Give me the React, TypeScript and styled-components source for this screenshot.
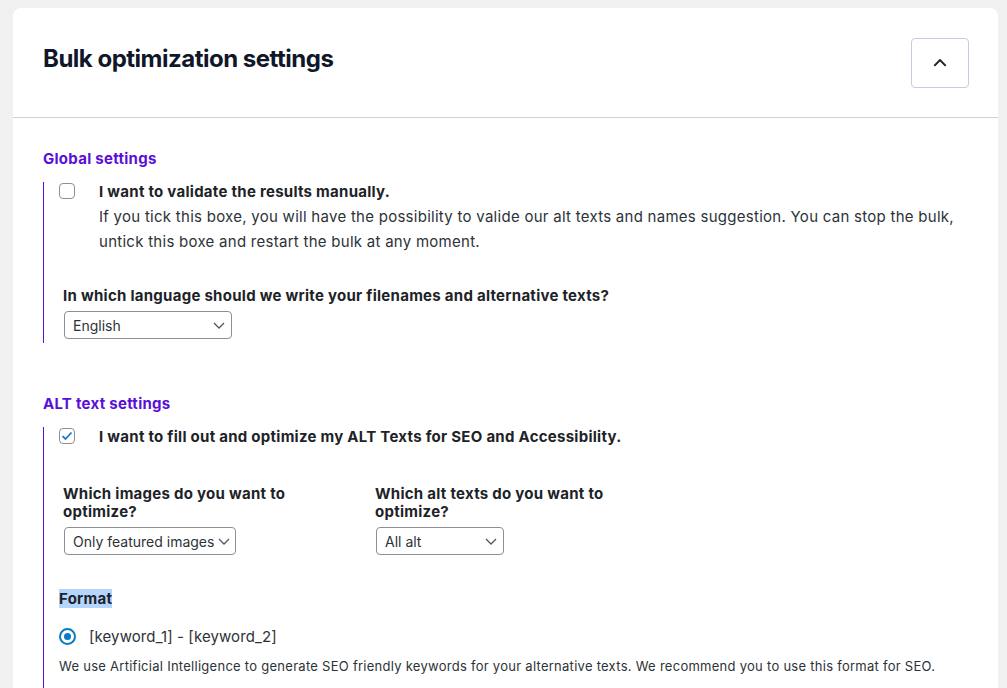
import React from "react";
import styled, { createGlobalStyle } from "styled-components";

const GlobalStyle = createGlobalStyle`
  html, body {
    margin: 0;
    padding: 0;
    background: #f0f0f1;
    font-family: Inter, "Liberation Sans", sans-serif;
    letter-spacing: 0.27px;
    color: #1d2327;
  }
`;

const Page = styled.div`
  padding: 8px 9px 0 13px;
  height: 680px;
  overflow: hidden;
`;

const Card = styled.div`
  background: #fff;
  border-radius: 8px 8px 0 0;
  min-height: 700px;
`;

const CardHeader = styled.div`
  height: 110px;
  display: flex;
  align-items: center;
  justify-content: space-between;
  padding: 0 29px 0 30px;
  border-bottom: 1px solid #c8d2df;
  box-sizing: border-box;
`;

const Title = styled.h2`
  margin: 0;
  margin-top: -8px;
  font-size: 24px;
  font-weight: 700;
  letter-spacing: -0.5px;
  color: #0f1729;
`;

const CollapseButton = styled.button`
  width: 58px;
  height: 50px;
  border: 1px solid #c3cfdf;
  border-radius: 4px;
  background: #fff;
  display: flex;
  align-items: center;
  justify-content: center;
  padding: 0;
`;

const Body = styled.div`
  padding: 31px 30px 0 30px;
`;

const SectionTitle = styled.h3`
  margin: 0 0 14px;
  font-size: 15px;
  font-weight: 700;
  color: #5a0fd9;
`;

const Section = styled.div<{ $gap: number }>`
  margin-bottom: ${(p) => p.$gap}px;
`;

const Rail = styled.div`
  border-left: 1px solid #5a0fd9;
  padding-left: 15px;
  padding-bottom: 4px;
`;

const CheckRow = styled.div`
  display: flex;
  align-items: flex-start;
  gap: 24px;
`;

const Box = styled.span`
  flex: none;
  width: 16px;
  height: 16px;
  margin-top: 1px;
  box-sizing: border-box;
  border: 1px solid #8c8f94;
  border-radius: 4px;
  display: flex;
  align-items: center;
  justify-content: center;
  background: #fff;
`;

const CheckText = styled.div`
  font-size: 15px;
  line-height: 25px;
  margin-top: -3px;
  color: #2c3338;
`;

const Strong = styled.div`
  font-weight: 700;
  color: #1d2327;
`;

const Field = styled.div`
  padding-left: 4px;
`;

const Label = styled.div`
  font-size: 15px;
  font-weight: 700;
  line-height: 18px;
  color: #1d2327;
  margin-bottom: 6px;
`;

const Select = styled.div<{ $w: number }>`
  width: ${(p) => p.$w}px;
  height: 28px;
  box-sizing: border-box;
  border: 1px solid #8c8f94;
  border-radius: 4px;
  display: flex;
  align-items: center;
  justify-content: space-between;
  gap: 4px;
  padding: 0 6px 0 8px;
  font-size: 14px;
  letter-spacing: 0;
  color: #2c3338;
  margin-left: 1px;
  white-space: nowrap;
  svg {
    flex: none;
  }
`;

const Columns = styled.div`
  display: grid;
  grid-template-columns: 256px 256px;
  column-gap: 56px;
  padding-left: 4px;
`;

const Format = styled.span`
  font-size: 15px;
  font-weight: 700;
  color: #1d2327;
  background: #b4d5fe;
`;

const RadioRow = styled.div`
  display: flex;
  align-items: center;
  gap: 13px;
  font-size: 15px;
  letter-spacing: 0.1px;
  color: #2c3338;
`;

const Radio = styled.span`
  flex: none;
  width: 17px;
  height: 17px;
  box-sizing: border-box;
  border-radius: 50%;
  border: 2px solid #0a7cc4;
  display: flex;
  align-items: center;
  justify-content: center;
  &::after {
    content: "";
    width: 7px;
    height: 7px;
    border-radius: 50%;
    background: #0a7cc4;
  }
`;

const Hint = styled.div`
  font-size: 13px;
  color: #2c3338;
  margin-top: 12px;
`;

const Chevron = ({ up }: { up?: boolean }) => (
  <svg width={up ? 14 : 12} height={up ? 8 : 7} viewBox="0 0 12 7" fill="none">
    <path
      d={up ? "M1 6L6 1L11 6" : "M1 1L6 6L11 1"}
      stroke={up ? "#1d2327" : "#50575e"}
      strokeWidth={up ? 1.8 : 1.3}
    />
  </svg>
);

const Check = () => (
  <svg width="12" height="10" viewBox="0 0 12 10" fill="none">
    <path d="M1.5 5.2L4.5 8L10.5 1.5" stroke="#1f78c1" strokeWidth="1.8" />
  </svg>
);

export default function App() {
  return (
    <>
      <GlobalStyle />
      <Page>
        <Card>
          <CardHeader>
            <Title>Bulk optimization settings</Title>
            <CollapseButton>
              <Chevron up />
            </CollapseButton>
          </CardHeader>
          <Body>
            <Section $gap={51}>
              <SectionTitle>Global settings</SectionTitle>
              <Rail>
                <CheckRow>
                  <Box />
                  <CheckText>
                    <Strong>I want to validate the results manually.</Strong>
                    If you tick this boxe, you will have the possibility to valide our alt texts and names
                    suggestion. You can stop the bulk, untick this boxe and restart the bulk at any moment.
                  </CheckText>
                </CheckRow>
                <Field style={{ marginTop: 33 }}>
                  <Label>In which language should we write your filenames and alternative texts?</Label>
                  <Select $w={168}>
                    English <Chevron />
                  </Select>
                </Field>
              </Rail>
            </Section>
            <Section $gap={0}>
              <SectionTitle>ALT text settings</SectionTitle>
              <Rail>
                <CheckRow>
                  <Box>
                    <Check />
                  </Box>
                  <CheckText>
                    <Strong>I want to fill out and optimize my ALT Texts for SEO and Accessibility.</Strong>
                  </CheckText>
                </CheckRow>
                <Columns style={{ marginTop: 36 }}>
                  <div>
                    <Label>Which images do you want to optimize?</Label>
                    <Select $w={172}>
                      Only featured images <Chevron />
                    </Select>
                  </div>
                  <div>
                    <Label>Which alt texts do you want to optimize?</Label>
                    <Select $w={128}>
                      All alt <Chevron />
                    </Select>
                  </div>
                </Columns>
                <div style={{ marginTop: 33 }}>
                  <Format>Format</Format>
                </div>
                <RadioRow style={{ marginTop: 19 }}>
                  <Radio />
                  [keyword_1] - [keyword_2]
                </RadioRow>
                <Hint>
                  We use Artificial Intelligence to generate SEO friendly keywords for your alternative texts. We
                  recommend you to use this format for SEO.
                </Hint>
                <div style={{ height: 60 }} />
              </Rail>
            </Section>
          </Body>
        </Card>
      </Page>
    </>
  );
}
